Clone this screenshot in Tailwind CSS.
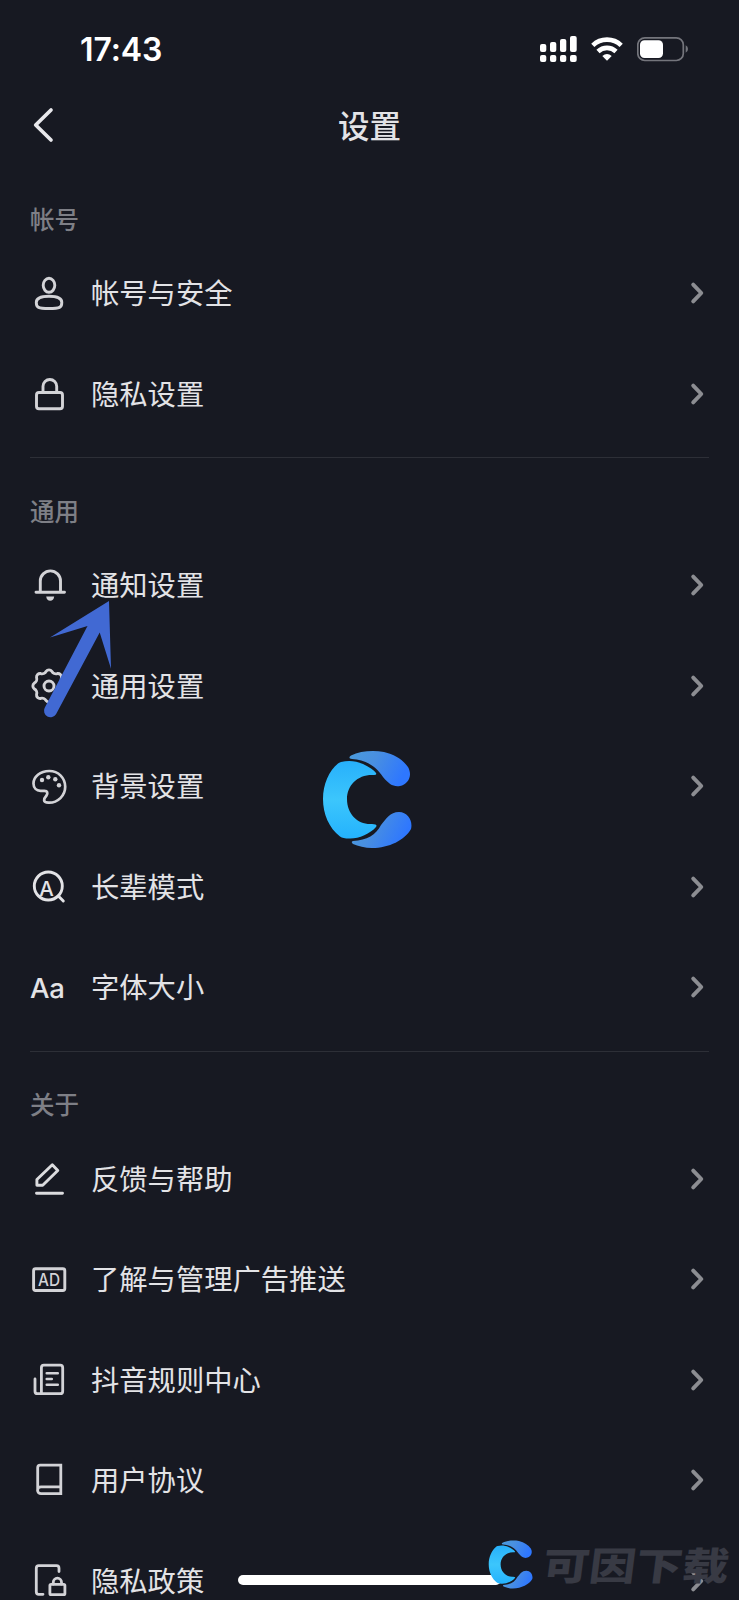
<!DOCTYPE html>
<html lang="zh-CN">
<head>
<meta charset="utf-8">
<meta name="viewport" content="width=device-width, initial-scale=1">
<title>设置</title>
<script src="https://cdn.jsdelivr.net/npm/@tailwindcss/browser@4"></script>
</head>
<body class="bg-[#171922]">
<svg class="absolute size-0">
  <defs>
    <linearGradient id="crescent" x1="0" y1="0" x2="0" y2="1"><stop offset="0" stop-color="#27b0fb"/><stop offset=".5" stop-color="#3cc6fc"/><stop offset="1" stop-color="#24b2fd"/></linearGradient>
    <linearGradient id="wing" x1="0" y1="0" x2="1" y2=".3"><stop offset="0" stop-color="#4a9bdc"/><stop offset=".45" stop-color="#498fe0"/><stop offset="1" stop-color="#2e77ff"/></linearGradient>
  </defs>
  <symbol id="chevron" viewBox="0 0 16 24"><path d="M3.200 3.600 11.300 12 3.200 20.400" fill="none" stroke="#8c8d92" stroke-width="3.900" stroke-linecap="round" stroke-linejoin="round"/></symbol>
  <symbol id="logo" viewBox="22 20 90 99">
    <path fill="url(#crescent)" d="M41 32C49 30 56 31 63 34C69 37 74 40 76 43Q77 45 74 45C58 44 47 55 47 69C47 84 58 95 72 94Q78 94 76 97C70 104 58 109 49 108.500Q43 108.500 40 106.500C29 98 23 84 23 69C23 54 29 41 38 33.500Q39 32.500 41 32Z"/>
    <path fill="url(#wing)" d="M50 28.500Q48.500 27 51 25.500C60 21 73 20 84 22C95 24.500 103 30 108 37C113 46 108 54 100 56C93 57 89 54 83 47C76 36 65 29.500 52 29Z"/>
    <path fill="url(#wing)" d="M53 111C67 110 76 105 81 95C86 89 90 82 99 82C108 82 113 91 111 99C105 110 89 118 72 118C65 118 58 116 53 114Q50.500 111.500 53 111Z"/>
  </symbol>
</svg>

<div class="relative h-[1600px] w-[739px] overflow-hidden bg-[#171922] font-['Inter','Noto_Sans_CJK_SC',sans-serif] text-[#e3e3e6]">
  <div class="flex h-[96px] items-center justify-between pl-[80px] pr-[49px] pt-[2px]">
    <span class="pt-[2px] text-[32px] font-semibold leading-none tracking-[-0.100px] text-white">17:43</span>
    <div class="flex items-center gap-[13px]">
      <svg class="h-[28px] w-[38px]" viewBox="541 35 38 28" fill="#fff">
        <rect x="541" y="44" width="6.300" height="8" rx="2"/><rect x="551" y="42" width="6.300" height="10" rx="2"/><rect x="561" y="39" width="6.300" height="13" rx="2"/><rect x="571" y="36" width="6.700" height="16" rx="2"/>
        <rect x="541" y="55" width="6.300" height="7" rx="2"/><rect x="551" y="55" width="6.300" height="7" rx="2"/><rect x="561" y="55" width="6.300" height="7" rx="2"/><rect x="571" y="55" width="6.700" height="7" rx="2"/>
      </svg>
      <svg class="h-[28px] w-[32px]" viewBox="591.500 35 32 28" fill="none" stroke="#fff" stroke-width="4.600">
        <path d="M593.300 45.300A20.500 20.500 0 0 1 621.700 45.300"/><path d="M598.500 51.500A13 13 0 0 1 616.500 51.500"/><path d="M602.800 56Q607.500 51.800 612.200 56L607.500 60.800Z" fill="#fff" stroke="none"/>
      </svg>
      <svg class="ml-[1px] mr-[1px] h-[28px] w-[52px]" viewBox="638 35 52 28">
        <rect x="638.800" y="37.800" width="45.500" height="22.700" rx="7" fill="none" stroke="#74757c" stroke-width="1.700"/><rect x="641" y="40.200" width="23" height="17.800" rx="4.500" fill="#fff"/><path d="M686.700 45.300Q689 46.500 689 49Q689 51.700 686.700 52.800Z" fill="#74757c"/>
      </svg>
    </div>
  </div>

  <header class="grid h-[60px] grid-cols-3 items-center px-[30px]">
    <svg class="h-[40px] w-[26px]" viewBox="0 0 26 40"><path d="M21 4 5.700 19 21 34" fill="none" stroke="#e8e8ec" stroke-width="3.700" stroke-linecap="round" stroke-linejoin="round"/></svg>
    <h1 class="pt-[2px] text-center text-[31.500px] font-medium leading-none">设置</h1>
  </header>

  <main class="px-[30px]">
    <section class="pt-[40px]">
      <h2 class="h-[47px] pt-px text-[24.500px] font-medium leading-[47px] text-[#7e7f86]">帐号</h2>
      <div class="flex h-[100.500px] items-center gap-[22px] pr-[3px]">
        <svg class="-ml-px size-[40px] shrink-0" viewBox="0 0 40 40" fill="none" stroke="#d3d3d7" stroke-width="2.900"><ellipse cx="20" cy="12.300" rx="5.800" ry="7"/><path d="M7.300 29.500C7.300 25 13 23.300 20 23.300S32.800 25 32.800 29.500C32.800 34.500 31 35.500 20 35.500S7.300 34.500 7.300 29.500Z"/></svg>
        <span class="flex-1 pt-[2px] text-[28.300px] leading-none">帐号与安全</span><svg class="h-[24px] w-[16px]"><use href="#chevron"/></svg>
      </div>
      <div class="flex h-[100.500px] items-center gap-[22px] pr-[3px]">
        <svg class="-ml-px size-[40px] shrink-0" viewBox="0 0 40 40" fill="none" stroke="#d3d3d7" stroke-width="2.900"><rect x="7.500" y="18.500" width="26" height="16.200" rx="2.500"/><path d="M14 18.500V12.300A6.800 6.800 0 0 1 27.700 12.300V18.500"/></svg>
        <span class="flex-1 pt-[2px] text-[28.300px] leading-none">隐私设置</span><svg class="h-[24px] w-[16px]"><use href="#chevron"/></svg>
      </div>
    </section>

    <section class="mt-[13px] border-t border-[#2d2f37] pt-[30px]">
      <h2 class="h-[47px] pt-px text-[24.500px] font-medium leading-[47px] text-[#7e7f86]">通用</h2>
      <div class="flex h-[100.500px] items-center gap-[22px] pr-[3px]">
        <svg class="-ml-px size-[40px] shrink-0" viewBox="0 0 40 40" fill="none" stroke="#d3d3d7" stroke-width="2.900" stroke-linecap="round"><path d="M7 27.200H35.500M11.300 26.500V16A10.100 10.100 0 0 1 31.500 16V26.500"/><path d="M17.200 31.400H25.200Q24.500 35.700 21.200 35.700T17.200 31.400Z" fill="#d3d3d7" stroke="none"/></svg>
        <span class="flex-1 pt-[2px] text-[28.300px] leading-none">通知设置</span><svg class="h-[24px] w-[16px]"><use href="#chevron"/></svg>
      </div>
      <div class="flex h-[100.500px] items-center gap-[22px] pr-[3px]">
        <svg class="-ml-px size-[40px] shrink-0" viewBox="0 0 40 40" fill="none" stroke="#d3d3d7" stroke-width="2.900" stroke-linejoin="round"><circle cx="20" cy="20" r="5"/><path d="M17.140 5.280A3.600 3.600 0 0 1 22.860 5.280A4.500 4.500 0 0 0 28.390 7.560A3.600 3.600 0 0 1 32.440 11.610A4.500 4.500 0 0 0 34.720 17.140A3.600 3.600 0 0 1 34.720 22.860A4.500 4.500 0 0 0 32.440 28.390A3.600 3.600 0 0 1 28.390 32.440A4.500 4.500 0 0 0 22.860 34.720A3.600 3.600 0 0 1 17.140 34.720A4.500 4.500 0 0 0 11.610 32.440A3.600 3.600 0 0 1 7.560 28.390A4.500 4.500 0 0 0 5.280 22.860A3.600 3.600 0 0 1 5.280 17.140A4.500 4.500 0 0 0 7.560 11.610A3.600 3.600 0 0 1 11.610 7.560A4.500 4.500 0 0 0 17.140 5.280Z"/></svg>
        <span class="flex-1 pt-[2px] text-[28.300px] leading-none">通用设置</span><svg class="h-[24px] w-[16px]"><use href="#chevron"/></svg>
      </div>
      <div class="flex h-[100.500px] items-center gap-[22px] pr-[3px]">
        <svg class="-ml-px size-[40px] shrink-0" viewBox="0 0 40 40" fill="none" stroke="#d3d3d7" stroke-width="2.700" stroke-linejoin="round"><path d="M20.300 5C11 5 4.500 11 4.500 17.500C4.500 22 7.500 24.800 11.500 24.800H15.500C18.500 24.800 19 27 17.500 29.500C14.500 33 13.500 36.500 19.500 36.700C29 37 36.200 29.500 36.200 20.800C36.200 12 29.500 5 20.300 5Z"/><g fill="#d3d3d7" stroke="none"><circle cx="13" cy="14" r="2.200"/><circle cx="19.300" cy="11.200" r="2.200"/><circle cx="26.300" cy="13.200" r="2.200"/><circle cx="30" cy="19.200" r="2.200"/></g></svg>
        <span class="flex-1 pt-[2px] text-[28.300px] leading-none">背景设置</span><svg class="h-[24px] w-[16px]"><use href="#chevron"/></svg>
      </div>
      <div class="flex h-[100.500px] items-center gap-[22px] pr-[3px]">
        <svg class="-ml-px size-[40px] shrink-0" viewBox="0 0 40 40" fill="none" stroke="#e3e3e6" stroke-width="2.900" stroke-linecap="round"><circle cx="19.300" cy="19" r="14"/><path d="M29.300 29 34.300 34"/><text x="17.500" y="28.700" text-anchor="middle" font-size="20.500" font-weight="450" fill="#e3e3e6" stroke="none">A</text></svg>
        <span class="flex-1 pt-[2px] text-[28.300px] leading-none">长辈模式</span><svg class="h-[24px] w-[16px]"><use href="#chevron"/></svg>
      </div>
      <div class="flex h-[100.500px] items-center gap-[22px] pr-[3px]">
        <span class="-ml-px w-[40px] shrink-0 pl-px pt-[2px] text-[27.500px] font-medium leading-none tracking-[-0.200px]">Aa</span>
        <span class="flex-1 pt-[2px] text-[28.300px] leading-none">字体大小</span><svg class="h-[24px] w-[16px]"><use href="#chevron"/></svg>
      </div>
    </section>

    <section class="mt-[13px] border-t border-[#2d2f37] pt-[30px]">
      <h2 class="h-[47px] text-[24.500px] font-medium leading-[47px] text-[#7e7f86]">关于</h2>
      <div class="flex h-[100.500px] items-center gap-[22px] pr-[3px]">
        <svg class="-ml-px size-[40px] shrink-0" viewBox="0 0 40 40" fill="none" stroke="#dcdcdf" stroke-width="2.900" stroke-linecap="round" stroke-linejoin="round"><path d="M7.500 34.300H33.500M7.900 20.500 23.300 5.700 28.800 11.500 13.700 26.300H7.900Z"/></svg>
        <span class="flex-1 pt-[2px] text-[28.300px] leading-none">反馈与帮助</span><svg class="h-[24px] w-[16px]"><use href="#chevron"/></svg>
      </div>
      <div class="flex h-[100.500px] items-center gap-[22px] pr-[3px]">
        <svg class="-ml-px size-[40px] shrink-0" viewBox="0 0 40 40" fill="none" stroke="#d3d3d7" stroke-width="2.900"><rect x="4.600" y="9.700" width="31.200" height="21.800" rx="2"/><text x="20" y="26.700" text-anchor="middle" font-size="17" font-weight="500" textLength="22" lengthAdjust="spacingAndGlyphs" fill="#d3d3d7" stroke="none">AD</text></svg>
        <span class="flex-1 pt-[2px] text-[28.300px] leading-none">了解与管理广告推送</span><svg class="h-[24px] w-[16px]"><use href="#chevron"/></svg>
      </div>
      <div class="flex h-[100.500px] items-center gap-[22px] pr-[3px]">
        <svg class="-ml-px size-[40px] shrink-0" viewBox="0 0 40 40" fill="none" stroke="#d3d3d7" stroke-width="2.800" stroke-linecap="round"><path d="M12.400 33.700V7.700Q12.400 5.200 14.900 5.200H31.200Q33.700 5.200 33.700 7.700V31.200Q33.700 33.700 31.200 33.700H8.500Q6 33.700 6 31.200V19"/><path d="M17.700 13.300H28.800M17.700 19H22.800M17.700 24.800H28.800" stroke-width="2.500"/></svg>
        <span class="flex-1 pt-[2px] text-[28.300px] leading-none">抖音规则中心</span><svg class="h-[24px] w-[16px]"><use href="#chevron"/></svg>
      </div>
      <div class="flex h-[100.500px] items-center gap-[22px] pr-[3px]">
        <svg class="-ml-px size-[40px] shrink-0" viewBox="0 0 40 40" fill="none" stroke="#d3d3d7" stroke-width="2.800"><path d="M8.700 30.200V7.700Q8.700 5.200 11.200 5.200H31.800V33.700H12A3.450 3.450 0 0 1 12 26.800H31.800"/></svg>
        <span class="flex-1 pt-[2px] text-[28.300px] leading-none">用户协议</span><svg class="h-[24px] w-[16px]"><use href="#chevron"/></svg>
      </div>
      <div class="flex h-[100.500px] items-center gap-[22px] pr-[3px]">
        <svg class="-ml-px size-[40px] shrink-0" viewBox="0 0 40 40" fill="none" stroke="#d3d3d7" stroke-width="2.800" stroke-linecap="round"><path d="M30 10.500V7.200Q30 4.700 27.500 4.700H9.800Q7.300 4.700 7.300 7.200V30.700Q7.300 33.300 9.800 33.300H14"/><rect x="20.900" y="23.300" width="15" height="10.300" rx="1.200"/><path d="M24.300 23V21.300A4.100 4.100 0 0 1 32.500 21.300V23"/></svg>
        <span class="flex-1 pt-[2px] text-[28.300px] leading-none">隐私政策</span><svg class="h-[24px] w-[16px]"><use href="#chevron"/></svg>
      </div>
    </section>
  </main>

  <!-- Overlays: pointer arrow, centre logo, home indicator, corner watermark -->
  <svg class="absolute left-[40px] top-[595px] h-[130px] w-[80px]" viewBox="40 595 80 130" fill="#4169d3"><path d="M109 601 111 668.800 99.700 632.500 56 714.200A6.500 6.500 0 0 1 44.600 708L87.500 626 50 637.500Z"/></svg>
  <svg class="absolute left-[322px] top-[750px] h-[99px] w-[90px]"><use href="#logo"/></svg>
  <div class="absolute left-[238px] top-[1575px] h-[10px] w-[263px] rounded-full bg-white"></div>
  <svg class="absolute left-[488px] top-[1540px] h-[49px] w-[45px]"><use href="#logo"/></svg>
  <div class="absolute left-[543px] top-[1543px] origin-left -skew-x-6 scale-y-[0.820] whitespace-nowrap text-[46.500px] font-black leading-[46px] text-[#383a44]">可因下载</div>
</div>
</body>
</html>
